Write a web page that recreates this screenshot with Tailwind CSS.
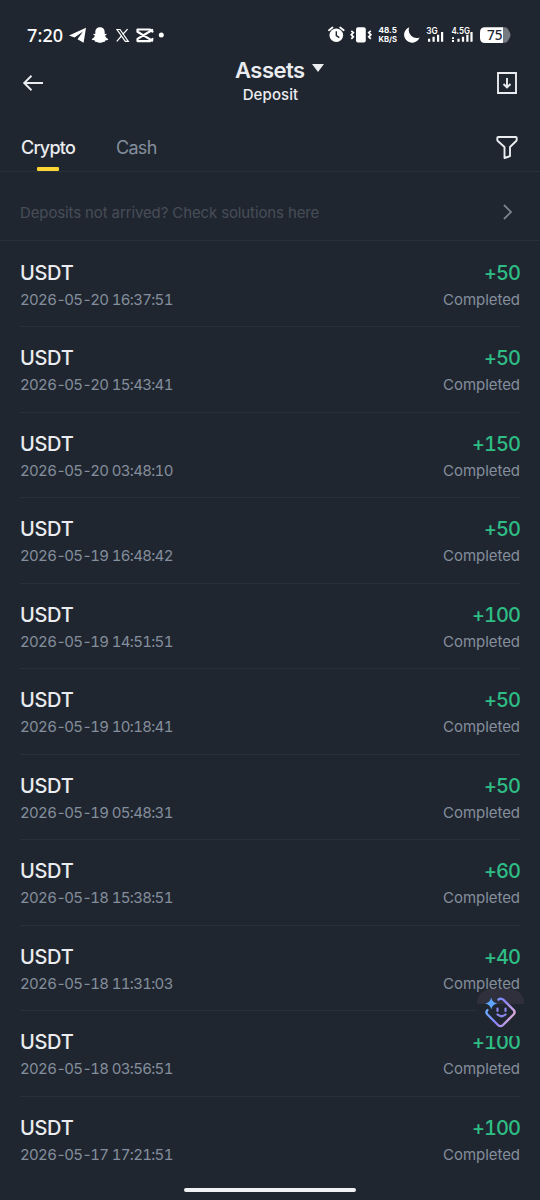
<!DOCTYPE html>
<html lang="en">
<head>
<meta charset="utf-8">
<title>Deposit history</title>
<script src="https://cdn.jsdelivr.net/npm/@tailwindcss/browser@4"></script>
</head>
<body class="bg-[#202630]">
<div class="relative flex h-[1200px] w-[540px] flex-col overflow-hidden bg-[#202630] font-['Inter',sans-serif] text-[#eaecef]">
  <!-- status bar -->
  <div class="flex h-[52px] shrink-0 items-center pt-[18px] pl-[27px] text-white">
    <span class="w-[42px] font-['Noto_Sans',sans-serif] text-[18px] leading-[18px] font-medium whitespace-nowrap tracking-[0.1px]">7:20</span>
    <svg class="h-[18px] w-[98px]" viewBox="69 26 98 18" fill="currentColor">
      <path d="M68.8 35.5 86 27.8 83.6 42.8 77.5 39.3 83 31.5 74.6 37.6Z"/>
      <path d="M100 27.2c-3.3 0-4.7 2.3-4.7 5v1.700l-1.800-.2c-.6.9.5 1.500 1.400 1.800-.5 2-1.800 3-3.200 3.600.2 1.300 2 1.200 3 1.500l.4 1.100c2-.3 2.800 1.100 4.900 1.100s2.900-1.400 4.900-1.100l.4-1.100c1-.3 2.800-.2 3-1.500-1.400-.6-2.700-1.600-3.200-3.600.9-.3 2-.9 1.400-1.800l-1.800.2v-1.700c0-2.700-1.400-5-4.700-5Z"/>
      <path d="M117 29.500h3l8.300 11.800h-3ZM127.600 29.200l-5 5.300M121.400 36l-4.600 5.300" fill="none" stroke="currentColor" stroke-width="1.200"/>
      <path d="M152.500 31.600 150 29.500h-12.500v2.200l14.700 8.900M152.500 39l-2.500 2.100h-12.500v-2.200l14.700-8.900" fill="none" stroke="currentColor" stroke-width="2.200" stroke-linejoin="round" stroke-linecap="round"/>
      <circle cx="161.300" cy="35" r="2.500"/>
    </svg>
    <svg class="ml-[161px] h-[20px] w-[184px]" viewBox="328 25 184 20" fill="currentColor">
      <circle cx="336.3" cy="35.3" r="6.8"/>
      <path d="M329 30.2l3.5-2.7M343.7 30.2l-3.5-2.7" stroke="currentColor" stroke-width="1.8" stroke-linecap="round"/>
      <path d="M336.3 31.2v4.5l3 2" fill="none" stroke="#202630" stroke-width="1.4"/>
      <rect x="356" y="27.2" width="9.8" height="15.2" rx="2"/>
      <path d="M351.3 30.8l2 1.8-2 2.2 2 2-2 2M370.8 30.8l-2 1.8 2 2.2-2 2 2 2" fill="none" stroke="currentColor" stroke-width="1.8"/>
      <text x="378.5" y="33.2" font-size="8.2" font-weight="700" textLength="18.5" lengthAdjust="spacingAndGlyphs">48.5</text>
      <text x="378.5" y="41.7" font-size="7.6" font-weight="700" textLength="18.5" lengthAdjust="spacingAndGlyphs">KB/S</text>
      <path d="M409.300 27.200a8 8 0 1 0 10.300 10.300A8 8 0 0 1 409.300 27.200Z"/>
      <text x="426.2" y="33.7" font-size="9" font-weight="600" textLength="11.5" lengthAdjust="spacingAndGlyphs">3G</text>
      <path d="M428 38.800h2.200v3h-2.200zM432.500 36.800h2.200v5h-2.200zM437 34.800h2.200v7h-2.200zM441 32h2.200v9.800h-2.200z"/>
      <text x="451.500" y="33.700" font-size="9" font-weight="600" textLength="18.500" lengthAdjust="spacingAndGlyphs">4.5G</text>
      <path d="M452 37.200h2v1.800h-2zM452 40h2v2h-2zM457.400 38.800h2.200v3h-2.200zM461.900 36.800h2.200v5h-2.200zM466.300 34.800h2.200v7h-2.200zM470.400 32h2.200v9.800h-2.200z"/>
      <path d="M502 27.300h2.500q3 0 4 3l1 1.500q2 3.300 0 6.500l-1 1.500q-1 3-4 3h-2.500Z" fill="#757980"/>
      <path d="M485 27.200h18v15.700h-18q-5 0-5-5v-5.700q0-5 5-5Z"/>
      <text x="487" y="40.400" font-size="14.500" font-weight="500" fill="#202630" textLength="15.500" lengthAdjust="spacingAndGlyphs" font-family="Noto Sans">75</text>
    </svg>
  </div>

  <!-- header -->
  <header class="flex h-[64px] shrink-0 items-start justify-between pr-[22px] pl-[22px]">
    <svg class="mt-[21px] h-[20px] w-[22px]" viewBox="0 0 22 20" fill="none" stroke="#eaecef" stroke-width="1.900"><path d="M21 10H2M9.500 2.800 2.200 10l7.300 7.200"/></svg>
    <div class="flex flex-col items-center pt-[5px] pl-[1px]">
      <div class="flex items-center pl-[18px]">
        <span class="w-[69px] text-[22px] leading-[26px] font-semibold tracking-[-0.5px] whitespace-nowrap">Assets</span>
        <svg class="mb-[5px] ml-[8px] h-[8px] w-[12px]" viewBox="0 0 12 8" fill="#eaecef"><path d="M0 0h12L6 8Z"/></svg>
      </div>
      <span class="mt-[1px] text-[15px] leading-[22px] font-medium tracking-[0.1px]">Deposit</span>
    </div>
    <svg class="mt-[19px] h-[24px] w-[22px]" viewBox="0 0 22 24" fill="none" stroke="#eaecef" stroke-width="1.900"><path d="M2 2h18v20H2ZM11 7v9.500M7.500 13 11 16.500l3.500-3.500"/></svg>
  </header>

  <!-- tabs -->
  <nav class="flex h-[56px] shrink-0 items-start border-b border-[#2a303a] pl-[21px]">
    <div class="flex w-[54px] flex-col items-center pt-[20px]">
      <span class="text-[18px] leading-[24px] font-medium tracking-[-0.8px]">Crypto</span>
      <span class="mt-[7px] h-[4px] w-[22px] rounded-[1px] bg-[#fcd535]"></span>
    </div>
    <span class="mt-[20px] ml-[41px] text-[18px] leading-[24px] tracking-[-0.7px] text-[#848e9c]">Cash</span>
    <svg class="mt-[19px] mr-[21px] ml-auto h-[25px] w-[24px]" viewBox="0 0 24 25" fill="none" stroke="#eaecef" stroke-width="1.900" stroke-linejoin="round"><path d="M3.300 2h17.400q1 0 1 1v1.800q0 .7-.5 1.200L15 12v9.200L9.500 23V12L2.800 6q-.5-.5-.5-1.200V3q0-1 1-1Z"/></svg>
  </nav>

  <!-- help link -->
  <div class="flex h-[69px] shrink-0 items-center justify-between border-b border-[#2a303a] pt-[12px] pr-[27px] pl-[20px]">
    <span class="pt-[2px] text-[15px] tracking-[-0.12px] text-[#474d57]">Deposits not arrived? Check solutions here</span>
    <svg class="h-[16px] w-[11px]" viewBox="0 0 11 16" fill="none" stroke="#78808c" stroke-width="1.900"><path d="M2 1l7 7-7 7"/></svg>
  </div>

  <main id="rows" class="flex flex-col px-[20px] pt-[0.5px]"></main>

  <!-- floating assistant -->
  <div class="absolute top-[989px] left-[477px] flex h-[47px] w-[47px] flex-col">
    <div class="h-[15px] rounded-t-[14px] bg-[#3b3744]/60"></div>
    <div class="h-[32px] bg-[#202630]"></div>
    <svg class="absolute top-[8px] left-[7px] h-[32px] w-[33px]" viewBox="484 997 33 32" fill="none">
      <defs><linearGradient id="g" x1="485" y1="1006" x2="515" y2="1018" gradientUnits="userSpaceOnUse"><stop stop-color="#63b5ff"/><stop offset=".5" stop-color="#8b82fa"/><stop offset="1" stop-color="#e8b0d8"/></linearGradient></defs>
      <path d="M498.500 999.500q2.500-2 5 .4l10 10q2.200 2.300 0 4.600l-10.500 10.500q-2.500 2.300-5 0l-10.500-10.500q-2.200-2.300 0-4.500" stroke="url(#g)" stroke-width="2.300" stroke-linecap="round"/>
      <path d="M491.200 997.600q1 5 6 6-5 1-6 6-1-5-6-6 5-1 6-6Z" fill="#60a5fa"/>
      <path d="M497.500 1008.500v2.500M505.500 1008.500v2.500M497.500 1014.500q4 3.500 8 0" stroke="#8c85e8" stroke-width="2.200" stroke-linecap="round"/>
    </svg>
  </div>

  <!-- gesture bar -->
  <div class="absolute bottom-[8px] left-[184px] h-[4px] w-[172px] rounded-full bg-[#eff1f3]"></div>
</div>
<script>
const deposits = [
  ["2026-05-20 16:37:51", 50], ["2026-05-20 15:43:41", 50], ["2026-05-20 03:48:10", 150],
  ["2026-05-19 16:48:42", 50], ["2026-05-19 14:51:51", 100], ["2026-05-19 10:18:41", 50],
  ["2026-05-19 05:48:31", 50], ["2026-05-18 15:38:51", 60], ["2026-05-18 11:31:03", 40],
  ["2026-05-18 03:56:51", 100], ["2026-05-17 17:21:51", 100]
];
document.getElementById("rows").innerHTML = deposits.map(([time, amount]) => `
  <div class="flex h-[85.5px] shrink-0 flex-col border-b border-[#2a303a] pt-[17.3px] last:border-b-0">
    <div class="flex justify-between text-[20px] leading-[28px] font-medium">
      <span class="tracking-[-0.3px]">USDT</span><span class="tracking-[-0.95px] text-[#2ebd85] tabular-nums">+${amount}</span>
    </div>
    <div class="mt-[2px] flex justify-between text-[15px] leading-[22px] text-[#848e9c]">
      <span class="tracking-[-0.68px] tabular-nums">${time.replaceAll("-", "<span class='inline-block w-[8px] text-center'>-</span>")}</span><span class="tracking-[-0.05px]">Completed</span>
    </div>
  </div>`).join("");
</script>
</body>
</html>
